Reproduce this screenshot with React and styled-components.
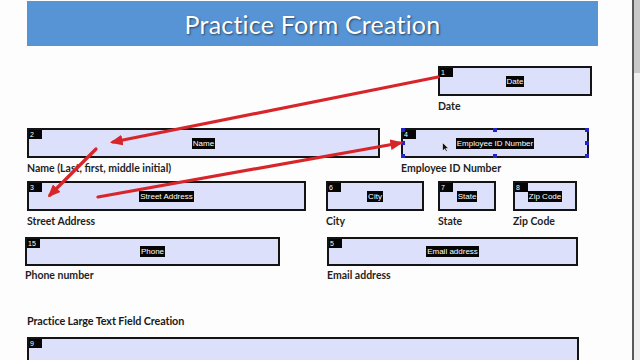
import React from "react";
import styled, { createGlobalStyle } from "styled-components";

const GlobalStyle = createGlobalStyle`
  html, body {
    margin: 0;
    padding: 0;
    background: #fdfdfd;
    overflow: hidden;
  }
  body {
    font-family: Lato, "Open Sans", sans-serif;
  }
`;

const Page = styled.div`
  display: flex;
  width: 640px;
  height: 360px;
  overflow: hidden;
`;

const Main = styled.div`
  position: relative;
  flex: 1;
  height: 100%;
`;

const Scrollbar = styled.div`
  width: 6px;
  border-left: 2px solid #5a5a5a;
  background: #f0f0f0;
  display: flex;
  flex-direction: column;
`;

const Thumb = styled.div`
  height: 73px;
  background: #c9c9c9;
`;

const Banner = styled.div`
  margin: 1px 34px 0 27px;
  height: 45px;
  background: #5794d5;
  display: flex;
  align-items: center;
  justify-content: center;
  color: #fff;
  font-size: 25px;
  letter-spacing: 0.2px;
  text-shadow: 1px 1px 2px rgba(0, 0, 0, 0.55);
`;

const Row = styled.div`
  display: flex;
  align-items: flex-start;
  margin-top: ${(p) => p.$mt}px;
`;

const Group = styled.div`
  margin-left: ${(p) => p.$ml}px;
  width: ${(p) => p.$w}px;
`;

const Field = styled.div`
  position: relative;
  box-sizing: border-box;
  height: ${(p) => p.$h || 30}px;
  border: 2px solid #141414;
  background: #dde0fa;
  display: flex;
  align-items: center;
  justify-content: center;
`;

const Tag = styled.span`
  position: absolute;
  left: 0;
  top: 0;
  min-width: 11px;
  height: 9px;
  padding: 0 1px;
  background: #050505;
  color: #fff;
  font-family: "Liberation Sans", sans-serif;
  font-size: 7px;
  line-height: 9px;
`;

const Caption = styled.span`
  background: #050505;
  color: #fff;
  font-family: "Liberation Sans", sans-serif;
  font-size: 8px;
  line-height: 11px;
  padding: 0 1px;
`;

const Label = styled.div`
  margin-top: ${(p) => p.$mt ?? 3}px;
  font-size: 10.5px;
  font-weight: 700;
  color: #1f1f1f;
  line-height: 14px;
  white-space: nowrap;
`;

const Heading = styled.div`
  margin: 32px 0 0 27px;
  font-size: 10.8px;
  font-weight: 700;
  letter-spacing: -0.1px;
  color: #1a1a1a;
  line-height: 14px;
`;

const Handle = styled.span`
  position: absolute;
  width: 4px;
  height: 4px;
  background: #2323c8;
  left: ${(p) => p.$x};
  top: ${(p) => p.$y};
  transform: translate(-50%, -50%);
`;

const Cursor = styled.svg`
  position: absolute;
  left: 39px;
  top: 12px;
`;

const Overlay = styled.svg`
  position: absolute;
  left: 0;
  top: 0;
  pointer-events: none;
`;

const FormField = ({ n, text, h, selected, children }) => (
  <Field $h={h}>
    <Tag>{n}</Tag>
    {text && <Caption>{text}</Caption>}
    {selected &&
      ["0%", "50%", "100%"].flatMap((x) =>
        ["0%", "50%", "100%"]
          .filter((y) => !(x === "50%" && y === "50%"))
          .map((y) => <Handle key={x + y} $x={x} $y={y} />)
      )}
    {children}
  </Field>
);

const arrows = [
  [438, 77, 113, 142],
  [96, 149, 50, 195],
  [98, 197, 400, 143],
];

export default function App() {
  return (
    <Page>
      <GlobalStyle />
      <Main>
        <Banner>Practice Form Creation</Banner>

        <Row $mt={20}>
          <Group $ml={438} $w={154}>
            <FormField n="1" text="Date" />
            <Label>Date</Label>
          </Group>
        </Row>

        <Row $mt={15}>
          <Group $ml={27} $w={353}>
            <FormField n="2" text="Name" />
            <Label>Name (Last, first, middle initial)</Label>
          </Group>
          <Group $ml={21} $w={188}>
            <FormField n="4" text="Employee ID Number" selected>
              <Cursor width="7" height="10" viewBox="0 0 7 10">
                <path d="M0.5 0.5 L0.5 9 L2.6 7 L4.2 9.6 L5.4 9 L3.9 6.4 L6.6 6.4 Z" fill="#111" stroke="#fff" strokeWidth="0.6" />
              </Cursor>
            </FormField>
            <Label>Employee ID Number</Label>
          </Group>
        </Row>

        <Row $mt={6}>
          <Group $ml={27} $w={279}>
            <FormField n="3" text="Street Address" />
            <Label>Street Address</Label>
          </Group>
          <Group $ml={20} $w={98}>
            <FormField n="6" text="City" />
            <Label>City</Label>
          </Group>
          <Group $ml={14} $w={58}>
            <FormField n="7" text="State" />
            <Label>State</Label>
          </Group>
          <Group $ml={17} $w={64}>
            <FormField n="8" text="Zip Code" />
            <Label>Zip Code</Label>
          </Group>
        </Row>

        <Row $mt={9}>
          <Group $ml={25} $w={255}>
            <FormField n="15" text="Phone" h={29} />
            <Label $mt={2}>Phone number</Label>
          </Group>
          <Group $ml={47} $w={251}>
            <FormField n="5" text="Email address" h={29} />
            <Label $mt={2}>Email address</Label>
          </Group>
        </Row>

        <Heading>Practice Large Text Field Creation</Heading>

        <Row $mt={9}>
          <Group $ml={27} $w={552}>
            <FormField n="9" h={40} />
          </Group>
        </Row>

        <Overlay width="632" height="360" viewBox="0 0 632 360">
          <defs>
            <marker id="head" markerWidth="4" markerHeight="3.4" refX="3" refY="1.7" orient="auto" markerUnits="strokeWidth">
              <path d="M0 0 L4 1.7 L0 3.4 Z" fill="#d8252a" />
            </marker>
          </defs>
          {arrows.map(([x1, y1, x2, y2], i) => (
            <line
              key={i}
              x1={x1}
              y1={y1}
              x2={x2}
              y2={y2}
              stroke="#d8252a"
              strokeWidth="3.2"
              strokeLinecap="round"
              markerEnd="url(#head)"
            />
          ))}
        </Overlay>
      </Main>
      <Scrollbar>
        <Thumb />
      </Scrollbar>
    </Page>
  );
}
